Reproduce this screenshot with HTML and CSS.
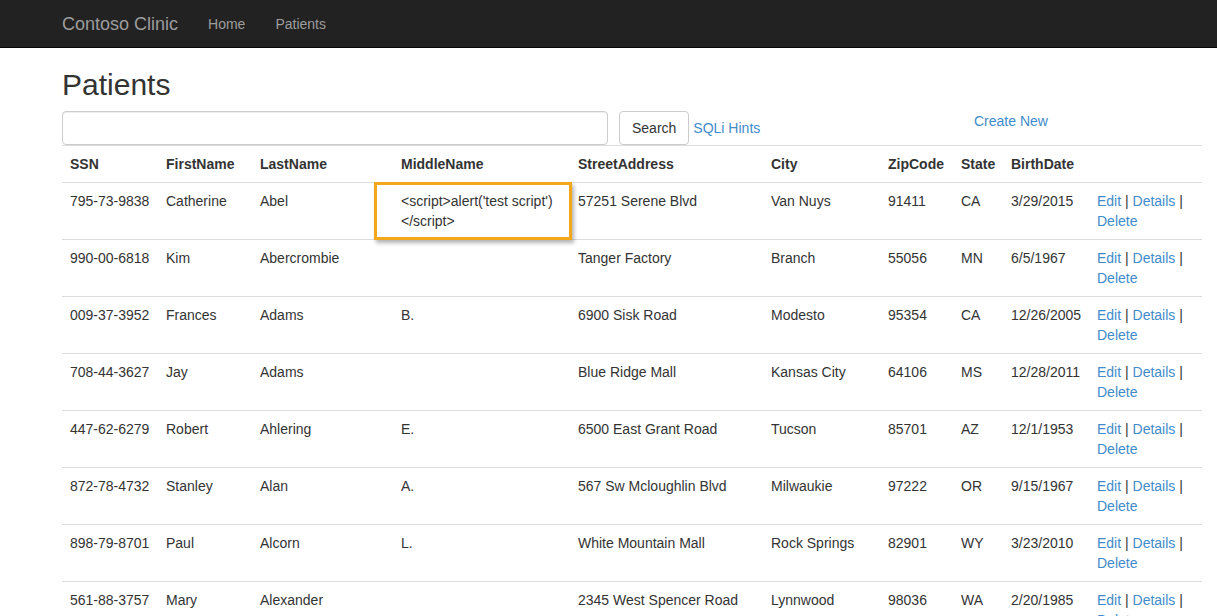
FILE: index.html
```html
<!DOCTYPE html>
<html>
<head>
<meta charset="utf-8">
<title>Patients - Contoso Clinic</title>
<link rel="stylesheet" href="styles.css">
</head>
<body>
<nav class="navbar">
  <div class="nav-inner">
    <a class="brand" href="#">Contoso Clinic</a>
    <a class="nav-link" href="#">Home</a>
    <a class="nav-link" href="#">Patients</a>
  </div>
</nav>
<main class="container">
  <h2 class="title">Patients</h2>
  <div class="toolbar">
    <form class="search-form">
      <input class="search-input" type="text">
      <button class="btn" type="button">Search</button>
      <a class="link hints" href="#">SQLi Hints</a>
    </form>
    <a class="link create" href="#">Create New</a>
  </div>
  <table class="table">
    <colgroup>
      <col class="c-ssn"><col class="c-first"><col class="c-last"><col class="c-middle"><col class="c-street"><col class="c-city"><col class="c-zip"><col class="c-state"><col class="c-birth"><col class="c-act">
    </colgroup>
    <tbody>
      <tr><th>SSN</th><th>FirstName</th><th>LastName</th><th>MiddleName</th><th>StreetAddress</th><th>City</th><th>ZipCode</th><th>State</th><th>BirthDate</th><th></th></tr>
      <tr><td>795-73-9838</td><td>Catherine</td><td>Abel</td><td class="marked">&lt;script&gt;alert('test script') &lt;/script&gt;<span class="highlight"></span></td><td>57251 Serene Blvd</td><td>Van Nuys</td><td>91411</td><td>CA</td><td>3/29/2015</td><td><a class="link" href="#">Edit</a> | <a class="link" href="#">Details</a> | <a class="link" href="#">Delete</a></td></tr>
      <tr><td>990-00-6818</td><td>Kim</td><td>Abercrombie</td><td></td><td>Tanger Factory</td><td>Branch</td><td>55056</td><td>MN</td><td>6/5/1967</td><td><a class="link" href="#">Edit</a> | <a class="link" href="#">Details</a> | <a class="link" href="#">Delete</a></td></tr>
      <tr><td>009-37-3952</td><td>Frances</td><td>Adams</td><td>B.</td><td>6900 Sisk Road</td><td>Modesto</td><td>95354</td><td>CA</td><td>12/26/2005</td><td><a class="link" href="#">Edit</a> | <a class="link" href="#">Details</a> | <a class="link" href="#">Delete</a></td></tr>
      <tr><td>708-44-3627</td><td>Jay</td><td>Adams</td><td></td><td>Blue Ridge Mall</td><td>Kansas City</td><td>64106</td><td>MS</td><td>12/28/2011</td><td><a class="link" href="#">Edit</a> | <a class="link" href="#">Details</a> | <a class="link" href="#">Delete</a></td></tr>
      <tr><td>447-62-6279</td><td>Robert</td><td>Ahlering</td><td>E.</td><td>6500 East Grant Road</td><td>Tucson</td><td>85701</td><td>AZ</td><td>12/1/1953</td><td><a class="link" href="#">Edit</a> | <a class="link" href="#">Details</a> | <a class="link" href="#">Delete</a></td></tr>
      <tr><td>872-78-4732</td><td>Stanley</td><td>Alan</td><td>A.</td><td>567 Sw Mcloughlin Blvd</td><td>Milwaukie</td><td>97222</td><td>OR</td><td>9/15/1967</td><td><a class="link" href="#">Edit</a> | <a class="link" href="#">Details</a> | <a class="link" href="#">Delete</a></td></tr>
      <tr><td>898-79-8701</td><td>Paul</td><td>Alcorn</td><td>L.</td><td>White Mountain Mall</td><td>Rock Springs</td><td>82901</td><td>WY</td><td>3/23/2010</td><td><a class="link" href="#">Edit</a> | <a class="link" href="#">Details</a> | <a class="link" href="#">Delete</a></td></tr>
      <tr><td>561-88-3757</td><td>Mary</td><td>Alexander</td><td></td><td>2345 West Spencer Road</td><td>Lynnwood</td><td>98036</td><td>WA</td><td>2/20/1985</td><td><a class="link" href="#">Edit</a> | <a class="link" href="#">Details</a> | <a class="link" href="#">Delete</a></td></tr>
    </tbody>
  </table>
</main>
</body>
</html>
```

FILE: styles.css
```css
* { box-sizing: border-box; }
html, body { margin: 0; padding: 0; }
body {
  font-family: "Liberation Sans", Arial, Helvetica, sans-serif;
  font-size: 14px;
  line-height: 20px;
  color: #333;
  background: #fff;
}
a { text-decoration: none; }
.navbar {
  background: #222;
  border-bottom: 1px solid #080808;
  height: 48px;
}
.nav-inner {
  display: flex;
  align-items: center;
  height: 47px;
  padding-left: 62px;
}
.brand {
  color: #9d9d9d;
  font-size: 18px;
  line-height: 20px;
  padding-right: 15px;
}
.nav-link {
  color: #9d9d9d;
  padding: 0 15px;
  line-height: 20px;
}
.container {
  padding-left: 62px;
  width: 1202px;
}
.title {
  font-size: 30px;
  font-weight: 500;
  line-height: 33px;
  margin: 20px 0 10px;
}
.toolbar {
  display: flex;
  height: 34px;
}
.search-form {
  display: flex;
  align-items: center;
  width: 912px;
}
.search-input {
  width: 546px;
  height: 34px;
  border: 1px solid #ccc;
  border-radius: 4px;
  box-shadow: inset 0 1px 1px rgba(0,0,0,.075);
  padding: 6px 12px;
  font: inherit;
}
.btn {
  margin-left: 11px;
  height: 34px;
  padding: 6px 12px;
  border: 1px solid #ccc;
  border-radius: 4px;
  background: #fff;
  color: #333;
  font: inherit;
}
.link { color: #428bca; }
.hints { margin-left: 4px; }
.create { align-self: flex-start; line-height: 20px; }
.table {
  width: 1140px;
  table-layout: fixed;
  border-collapse: collapse;
  border-spacing: 0;
}
.table th, .table td {
  padding: 8px;
  line-height: 20px;
  text-align: left;
  vertical-align: top;
  border-top: 1px solid #ddd;
}
.table th { font-weight: bold; }
.c-ssn { width: 96px; }
.c-first { width: 94px; }
.c-last { width: 141px; }
.c-middle { width: 177px; }
.c-street { width: 193px; }
.c-city { width: 117px; }
.c-zip { width: 73px; }
.c-state { width: 50px; }
.c-birth { width: 86px; }
.c-act { width: 113px; }
.marked { position: relative; }
.highlight {
  position: absolute;
  left: -19px;
  top: -1px;
  width: 198px;
  height: 58px;
  border: 3px solid #f4a71a;
  box-shadow: 2px 3px 4px rgba(0,0,0,.3);
  pointer-events: none;
}
```
